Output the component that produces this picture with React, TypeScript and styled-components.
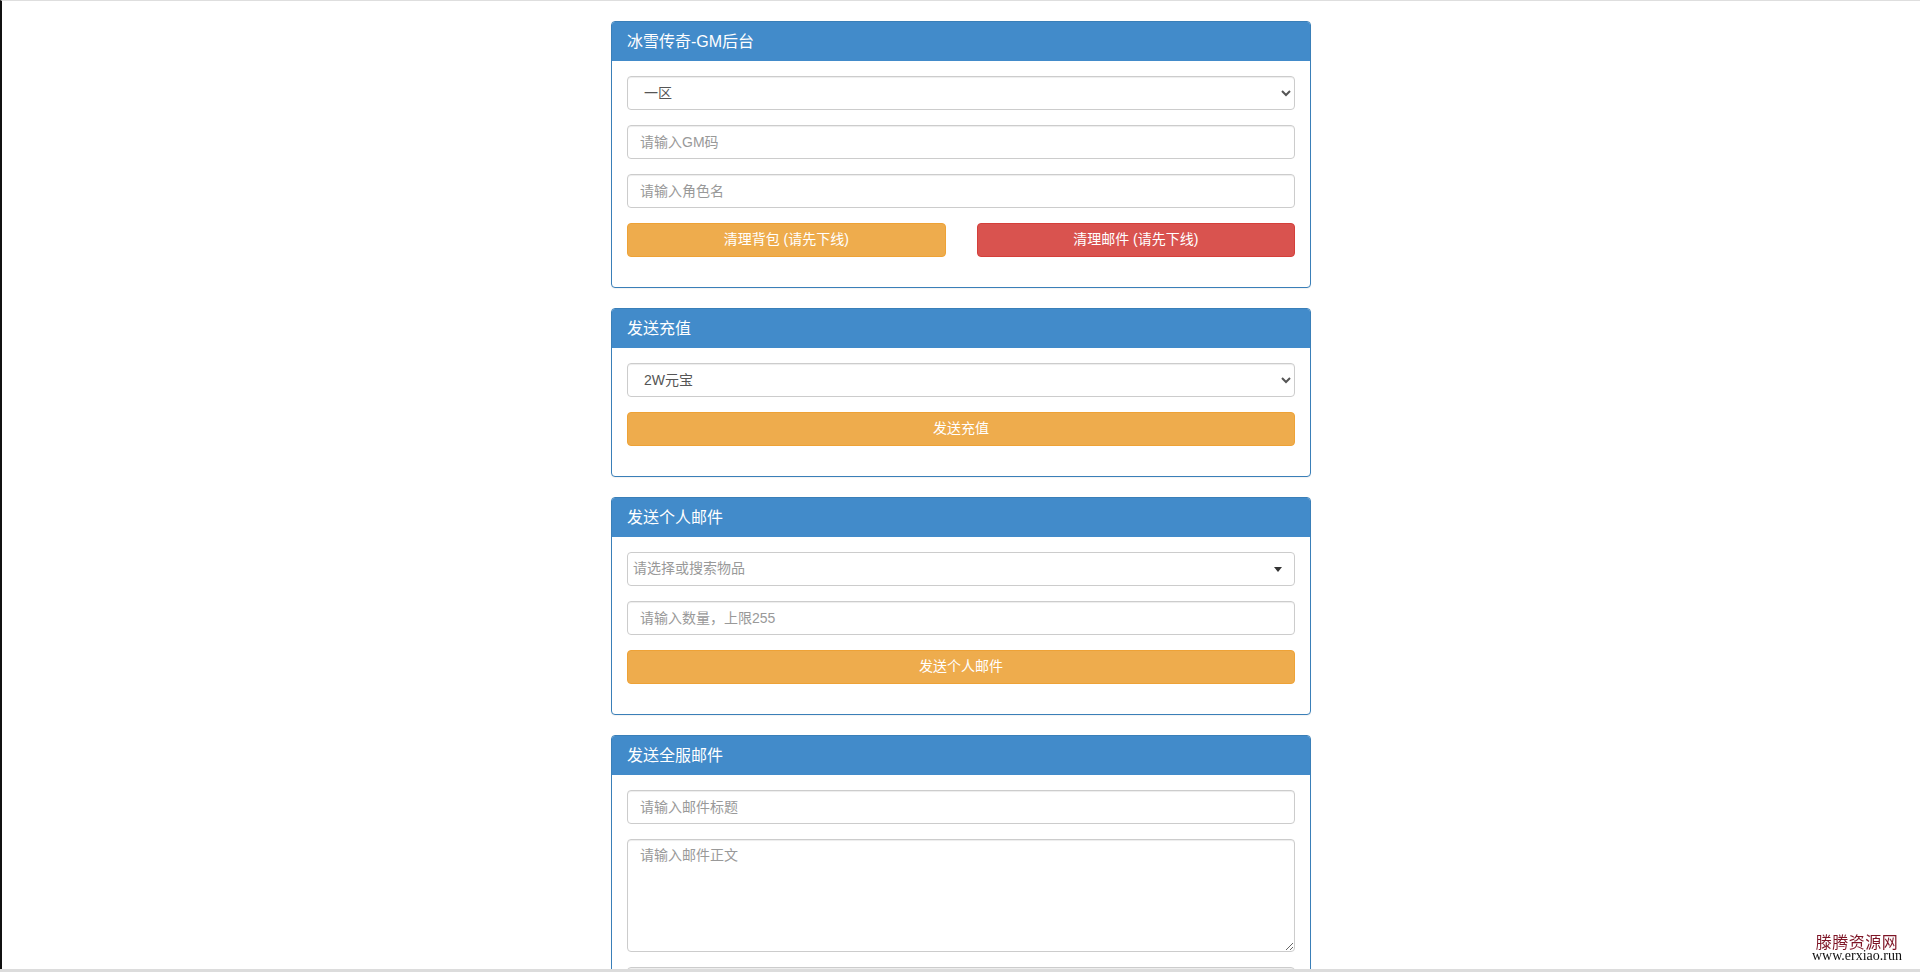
import styled, { createGlobalStyle } from "styled-components";

const GlobalStyle = createGlobalStyle`
  html, body {
    margin: 0;
    padding: 0;
    background: #fff;
    overflow: hidden;
  }
  body {
    font-family: "Liberation Sans", "Noto Sans CJK SC", sans-serif;
    font-size: 14px;
    line-height: 1.42857;
    color: #333;
  }
  * {
    box-sizing: border-box;
  }
`;

const Page = styled.div`
  min-height: 100vh;
  border-left: 2px solid #111;
  border-top: 1px solid #dedede;
`;

const Container = styled.div`
  width: 700px;
  margin: 20px auto 0;
`;

const Panel = styled.div`
  border: 1px solid #3a7fb8;
  border-radius: 4px;
  margin-bottom: 20px;
  background: #fff;
  box-shadow: 0 1px 1px rgba(0, 0, 0, 0.05);
  overflow: hidden;
`;

const PanelHeading = styled.div`
  background: #428bca;
  color: #fff;
  padding: 10px 15px;
  font-size: 16px;
  line-height: 19px;
`;

const PanelBody = styled.div`
  padding: 15px;
`;

const FormGroup = styled.div`
  margin-bottom: 15px;
`;

const controlBase = `
  display: block;
  width: 100%;
  height: 34px;
  padding: 6px 12px;
  font-family: "Liberation Sans", "Noto Sans CJK SC", sans-serif;
  font-size: 14px;
  line-height: 1.42857;
  color: #555;
  background: #fff;
  border: 1px solid #ccc;
  border-radius: 4px;
  box-shadow: inset 0 1px 1px rgba(0, 0, 0, 0.075);
  outline: none;
`;

const Select = styled.select`
  ${controlBase}
`;

const Input = styled.input`
  ${controlBase}
  &::placeholder {
    color: #999;
  }
`;

const TextArea = styled.textarea`
  ${controlBase}
  height: 113px;
  resize: vertical;
  &::placeholder {
    color: #999;
  }
`;

const Combo = styled.div`
  display: flex;
  align-items: center;
  justify-content: space-between;
  height: 34px;
  padding: 0 12px 0 5px;
  border: 1px solid #ccc;
  border-radius: 4px;
  background: #fff;
  color: #999;
  font-size: 14px;
`;

const Caret = styled.span`
  width: 0;
  height: 0;
  border-left: 4px solid transparent;
  border-right: 4px solid transparent;
  border-top: 5px solid #333;
`;

const ButtonRow = styled.div`
  display: grid;
  grid-template-columns: 1fr 1fr;
  column-gap: 31px;
`;

const Button = styled.button<{ $variant: "warning" | "danger" }>`
  display: block;
  width: 100%;
  height: 34px;
  padding: 6px 12px;
  font-family: "Liberation Sans", "Noto Sans CJK SC", sans-serif;
  font-size: 14px;
  line-height: 1.42857;
  color: #fff;
  border-radius: 4px;
  cursor: pointer;
  background: ${({ $variant }) => ($variant === "danger" ? "#d9534f" : "#eeac4d")};
  border: 1px solid ${({ $variant }) => ($variant === "danger" ? "#d43f3a" : "#eea236")};
`;

const Watermark = styled.div`
  position: fixed;
  right: 18px;
  bottom: 9px;
  display: flex;
  flex-direction: column;
  align-items: center;
  line-height: 1;
`;

const WatermarkName = styled.span`
  font-family: "Liberation Serif", "Noto Sans CJK SC", serif;
  font-size: 16px;
  color: #7e1526;
  letter-spacing: 0.5px;
`;

const WatermarkUrl = styled.span`
  font-family: "Liberation Serif", serif;
  font-size: 14px;
  color: #111;
  margin-top: -2px;
`;

const BottomEdge = styled.div`
  position: fixed;
  left: 0;
  right: 0;
  bottom: 0;
  height: 3px;
  background: #dcdcdc;
`;

export default function App() {
  return (
    <>
      <GlobalStyle />
      <Page>
        <Container>
          <Panel>
            <PanelHeading>冰雪传奇-GM后台</PanelHeading>
            <PanelBody>
              <FormGroup>
                <Select defaultValue="1">
                  <option value="1">一区</option>
                  <option value="2">二区</option>
                </Select>
              </FormGroup>
              <FormGroup>
                <Input placeholder="请输入GM码" />
              </FormGroup>
              <FormGroup>
                <Input placeholder="请输入角色名" />
              </FormGroup>
              <FormGroup>
                <ButtonRow>
                  <Button $variant="warning">清理背包 (请先下线)</Button>
                  <Button $variant="danger">清理邮件 (请先下线)</Button>
                </ButtonRow>
              </FormGroup>
            </PanelBody>
          </Panel>

          <Panel>
            <PanelHeading>发送充值</PanelHeading>
            <PanelBody>
              <FormGroup>
                <Select defaultValue="2w">
                  <option value="2w">2W元宝</option>
                  <option value="5w">5W元宝</option>
                </Select>
              </FormGroup>
              <FormGroup>
                <Button $variant="warning">发送充值</Button>
              </FormGroup>
            </PanelBody>
          </Panel>

          <Panel>
            <PanelHeading>发送个人邮件</PanelHeading>
            <PanelBody>
              <FormGroup>
                <Combo>
                  <span>请选择或搜索物品</span>
                  <Caret />
                </Combo>
              </FormGroup>
              <FormGroup>
                <Input placeholder="请输入数量，上限255" />
              </FormGroup>
              <FormGroup>
                <Button $variant="warning">发送个人邮件</Button>
              </FormGroup>
            </PanelBody>
          </Panel>

          <Panel>
            <PanelHeading>发送全服邮件</PanelHeading>
            <PanelBody>
              <FormGroup>
                <Input placeholder="请输入邮件标题" />
              </FormGroup>
              <FormGroup>
                <TextArea placeholder="请输入邮件正文" />
              </FormGroup>
              <FormGroup>
                <Select defaultValue="">
                  <option value="">请选择物品</option>
                </Select>
              </FormGroup>
            </PanelBody>
          </Panel>
        </Container>
      </Page>
      <Watermark>
        <WatermarkName>滕腾资源网</WatermarkName>
        <WatermarkUrl>www.erxiao.run</WatermarkUrl>
      </Watermark>
      <BottomEdge />
    </>
  );
}
